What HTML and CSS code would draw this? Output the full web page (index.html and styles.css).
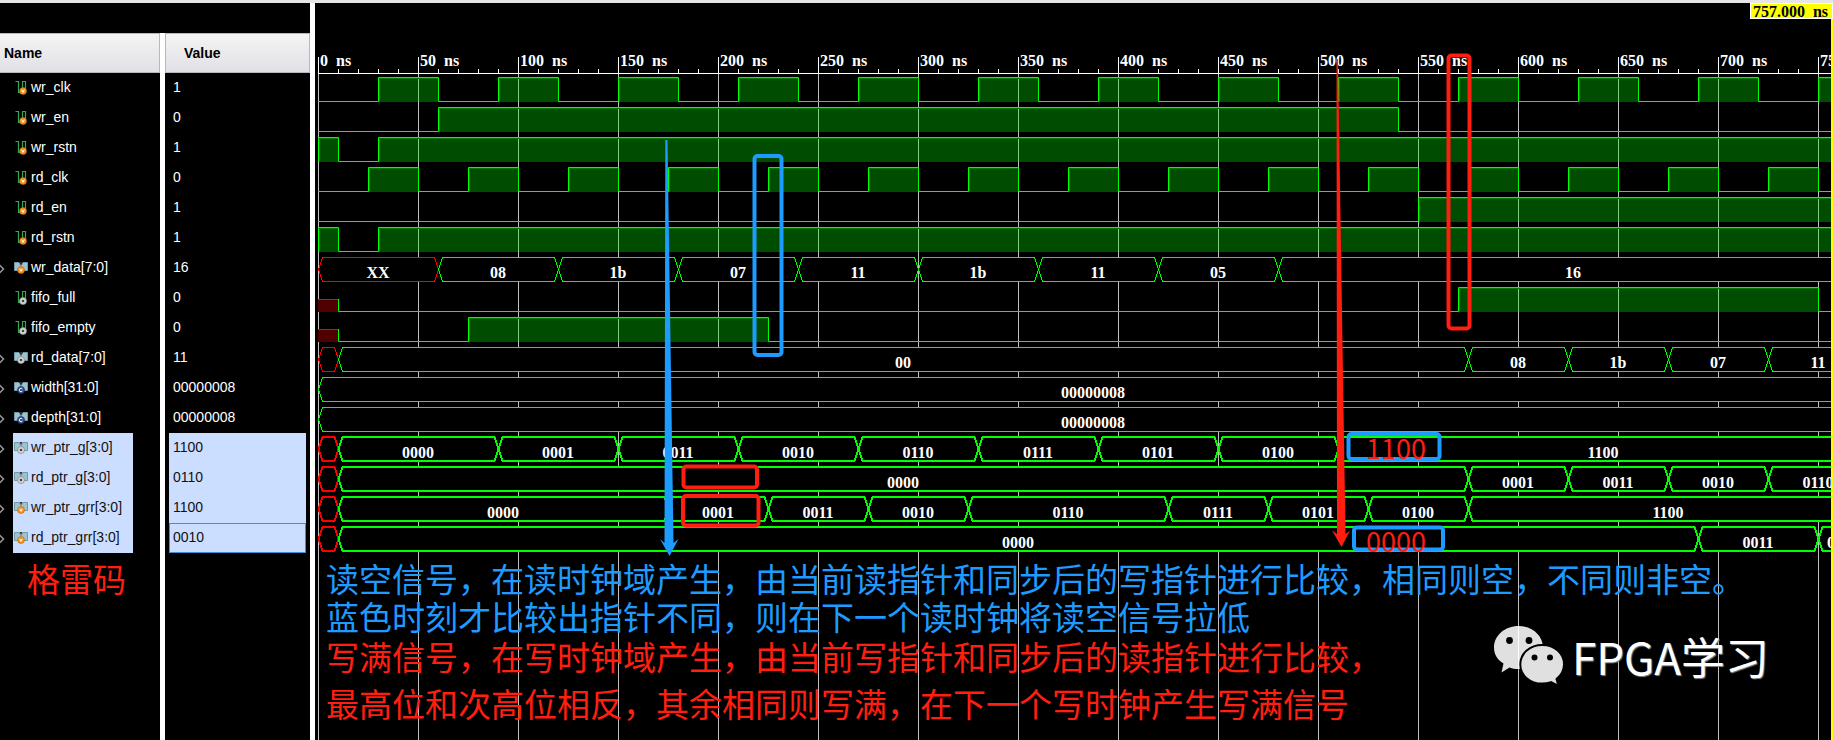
FILE: index.html
```html
<!DOCTYPE html>
<html lang="zh-CN">
<head>
<meta charset="utf-8">
<title>FIFO waveform</title>
<link rel="stylesheet" href="styles.css">
</head>
<body>
<svg class="defs" aria-hidden="true">
  <symbol id="scalar" viewBox="0 0 14 14">
    <path d="M1.500 1.500H4.500V12.500H6M8.500 10V1.500H11.500V10" fill="none" stroke="#35a552" stroke-width="1.200"/>
  </symbol>
  <symbol id="bus" viewBox="0 0 14 14">
    <path d="M.5 2.500H5L7 6L9 2.500H13.500V10.500H.5Z" fill="#9cc3d1" stroke="#7199a8"/>
    <path d="M5.500 2L7 5L8.500 2Z" fill="#333"/>
  </symbol>
  <symbol id="var" viewBox="0 0 8 8">
    <circle cx="4" cy="4" r="3.500" fill="#f7931e" stroke="#b56a1a" stroke-width=".6"/>
    <path d="M2.700 2.700L4 5.300L5.300 2.700" fill="none" stroke="#fff"/>
  </symbol>
  <symbol id="net" viewBox="0 0 8 8">
    <circle cx="4" cy="4" r="3.500" fill="#d8d8d8" stroke="#8a8a8a" stroke-width=".8"/>
    <circle cx="4" cy="4" r="1.300" fill="#444"/>
  </symbol>
  <symbol id="const" viewBox="0 0 8 8">
    <circle cx="4" cy="4" r="3.500" fill="#37508f" stroke="#24376b" stroke-width=".8"/>
    <path d="M5.300 2.900A1.700 1.700 0 1 0 5.300 5.100" fill="none" stroke="#fff"/>
  </symbol>
</svg>
<main class="viewer">
  <section class="signals">
    <table class="signal-table">
      <thead>
        <tr><th class="head-name" scope="col">Name</th><th class="split"></th><th class="head-value" scope="col">Value</th></tr>
      </thead>
      <tbody id="signal-rows"></tbody>
    </table>
    <p class="gray-note">格雷码</p>
  </section>
  <section class="waves">
    <div class="marker-bar"><span class="marker"><span>757.000</span> <span>ns</span></span></div>
    <div class="ruler" id="ruler"></div>
    <div class="plot">
      <div id="wave-rows"></div>
      <div class="notes">
        <p class="note note-blue">读空信号，在读时钟域产生，由当前读指针和同步后的写指针进行比较，相同则空，不同则非空。<br>蓝色时刻才比较出指针不同，则在下一个读时钟将读空信号拉低</p>
        <p class="note note-red">写满信号，在写时钟域产生，由当前写指针和同步后的读指针进行比较，</p>
        <p class="note note-red">最高位和次高位相反，其余相同则写满，在下一个写时钟产生写满信号</p>
      </div>
    </div>
    <div class="cursor"></div>
  </section>
  <svg class="overlay" aria-hidden="true">
    <g class="box-blue">
      <rect x="754.500" y="156" width="27" height="199" rx="3"/>
      <rect x="1348.500" y="434" width="91" height="25" rx="3"/>
      <rect x="1354" y="527.500" width="89" height="22" rx="3"/>
    </g>
    <g class="box-red">
      <rect x="1448.500" y="55.500" width="21" height="273" rx="3"/>
      <rect x="683.500" y="466.500" width="73.500" height="21" rx="3"/>
      <rect x="683" y="496" width="75.500" height="29.500" rx="3"/>
    </g>
    <path class="arrow-blue" d="M665.300 140H667.500L673.500 543L678.500 539L669.500 556L660 539L664.500 543Z"/>
    <path class="arrow-red" d="M1336.500 59H1338L1345.500 534L1350 530.500L1341.500 547L1332 530.500L1337 534Z"/>
    <text class="callout" x="1366" y="459">1100</text>
    <text class="callout" x="1366" y="552">0000</text>
  </svg>
  <div class="watermark">
    <svg class="logo" viewBox="0 0 70 60" aria-hidden="true">
      <path fill="#e0e0e0" d="M24.500 0C38 0 49 9.500 49 21.500S38 43 24.500 43C21 43 18.500 42.500 15.500 41.500L7.500 46.500L9.500 37.500C3.500 34 0 28.500 0 21.500C0 9.500 11 0 24.500 0Z"/>
      <path stroke="#fff" d="M24.500 0V43"/>
      <path fill="#e0e0e0" stroke="#000" stroke-width="2" d="M48.300 19C60.500 19 70 27.500 70 38.300C70 44.500 67 49.500 62.500 53L64.500 60L57 56.200C54 57.200 51.500 57.600 48.300 57.600C36 57.600 26.300 49.500 26.300 38.300C26.300 27.500 36 19 48.300 19Z"/>
      <g fill="#000"><circle cx="15.500" cy="14.500" r="3.400"/><circle cx="35" cy="14.500" r="3.400"/><circle cx="40.500" cy="31.500" r="3"/><circle cx="56" cy="31.500" r="3"/></g>
    </svg>
    <span>FPGA学习</span>
  </div>
</main>
<script src="waves.js"></script>
</body>
</html>
```

FILE: styles.css
```css
* { box-sizing: border-box; }

body {
  margin: 0;
  border-top: 3px solid #e6e6e6;
  background: #000;
  color: #fff;
  font-family: "Liberation Sans", Arial, sans-serif;
  font-size: 14px;
}

p { margin: 0; }

.defs { display: none; }

.viewer {
  position: relative;
  display: flex;
  min-height: calc(100vh - 3px);
  overflow: hidden;
}

/* name / value columns */
.signals {
  flex: none;
  width: 315px;
  padding-top: 30px;
  border-right: 5px solid #fff;
  background: linear-gradient(#fff, #fff) 160px 30px / 5px 100% no-repeat;
}

.signal-table {
  width: 100%;
  table-layout: fixed;
  border-collapse: separate;
  border-spacing: 0;
}

th {
  height: 40px;
  padding: 0 4px;
  border: 1px solid #b8b8bc;
  background: linear-gradient(#f4f4f4, #e0e0e6);
  color: #000;
  text-align: left;
}

th.head-name { width: 160px; border-left: 0; }
th.split { width: 5px; padding: 0; border: 0; background: #fff; }
th.head-value { padding-left: 18px; }

td {
  height: 30px;
  padding: 0;
}

.name { display: flex; height: 30px; }

.expander {
  width: 13px;
  height: 30px;
  padding: 0;
  border: 0;
  background: none;
}

.expander svg { display: block; width: 5px; height: 10px; margin-top: 2px; }

.label {
  display: flex;
  align-items: center;
  gap: 4px;
  width: 120px;
  padding: 0 0 2px 1px;
  font-size: 14px;
}

.icon { flex: none; width: 13px; height: 16px; overflow: visible; }

.value {
  height: 30px;
  margin: 0 4px;
  padding-left: 4px;
  line-height: 29px;
}

.selected .label, .selected .value { background: #ccdeff; color: #111; }
.current .value { border: 1px solid #3d8fd6; padding-left: 3px; line-height: 27px; }

.gray-note {
  padding-left: 27px;
  color: #ff1e0f;
  font: 33px/50px "Noto Sans CJK SC", sans-serif;
}

/* waveform pane */
.waves {
  position: relative;
  display: flex;
  flex-direction: column;
  flex: 1;
  min-width: 0;
  overflow: hidden;
  font: bold 16px/16px "Liberation Serif", serif;
}

.marker-bar {
  display: flex;
  flex: none;
  justify-content: flex-end;
  height: 54px;
}

.marker {
  display: flex;
  gap: 8px;
  height: 16px;
  padding: 0 4px 0 2px;
  border: 1px solid #fff;
  background: #ff0;
  color: #000;
  line-height: 16px;
}

.ruler {
  display: flex;
  flex: none;
  height: 16px;
  margin-left: 3px;
}

.mark {
  display: flex;
  flex: none;
  gap: 8px;
  width: 100px;
  padding-left: 1px;
  border-left: 1px solid #fff;
  background: repeating-linear-gradient(to right, transparent 0 19px, #fff 19px 20px) 0 100% / 98px 4px no-repeat;
  line-height: 8px;
}

.plot {
  flex: 1;
  margin-left: 3px;
  background:
    linear-gradient(#fff, #fff) 0 0 / 100% 1px no-repeat,
    repeating-linear-gradient(to right, #c0c0c0 0 1px, transparent 1px 100px);
}

.wave {
  display: block;
  width: 100%;
  height: 30px;
  overflow: visible;
}

.high { fill: rgb(0 230 0 / 33%); }
.shade { fill: none; stroke: #007c00; }
.trace { fill: none; stroke: #0f0; }
.unknown-fill { fill: #500000; }
.bus { fill: #000; stroke: #0f0; shape-rendering: crispEdges; }
.unknown { stroke: #f00; }
.thick .bus { stroke-width: 2px; }
.bus-text { fill: #fff; text-anchor: middle; }

.notes { padding: 6px 0 0 8px; }
.note { font: 33px/38px "Noto Sans CJK SC", sans-serif; white-space: nowrap; }
.note-blue { color: #1e9bff; }
.note-red { color: #ff1e0f; line-height: 42px; }
.note-red + .note-red { line-height: 52px; }

.cursor {
  position: absolute;
  top: 16px;
  right: 0;
  bottom: 0;
  width: 2px;
  background: #ff0;
}

/* annotations drawn over the traces */
.overlay {
  position: absolute;
  top: -3px;
  left: 0;
  width: 100%;
  height: calc(100% + 3px);
  pointer-events: none;
}

.box-blue, .box-red { fill: none; stroke-width: 4px; }
.box-blue { stroke: #1e9bff; }
.box-red { stroke: #ff1e0f; }
.arrow-blue { fill: #1e9bff; }
.arrow-red { fill: #ff1e0f; }
.callout { fill: #ff1e0f; font: 27px "Noto Sans CJK SC", sans-serif; }

.watermark {
  position: absolute;
  right: 64px;
  bottom: 54px;
  display: flex;
  align-items: center;
  gap: 8px;
  font: 44px/58px "Noto Sans CJK SC", sans-serif;
  text-shadow: 1px 1px 1px #888;
}

.logo { width: 70px; height: 60px; }
```

FILE: waves.js
```js
const PX_PER_NS = 2;
const END = 775;
const VIEW_END = 800;

const pulses = (start, width, period) => {
  const list = [];
  for (let t = start; t < END; t += period) list.push([t, t + width]);
  return list;
};

const signals = [
  { name: "wr_clk", value: "1", kind: "var", high: pulses(30, 30, 60) },
  { name: "wr_en", value: "0", kind: "var", high: [[60, 540]] },
  { name: "wr_rstn", value: "1", kind: "var", high: [[0, 10], [30, VIEW_END]] },
  { name: "rd_clk", value: "0", kind: "var", high: pulses(25, 25, 50) },
  { name: "rd_en", value: "1", kind: "var", high: [[550, VIEW_END]] },
  { name: "rd_rstn", value: "1", kind: "var", high: [[0, 10], [30, VIEW_END]] },
  { name: "wr_data[7:0]", value: "16", kind: "var", bus: [[0, "XX"], [60, "08"], [120, "1b"], [180, "07"], [240, "11"], [300, "1b"], [360, "11"], [420, "05"], [480, "16"]] },
  { name: "fifo_full", value: "0", kind: "net", unknown: 10, high: [[570, 750]] },
  { name: "fifo_empty", value: "0", kind: "net", unknown: 10, high: [[75, 225]] },
  { name: "rd_data[7:0]", value: "11", kind: "net", bus: [[0, ""], [10, "00"], [575, "08"], [625, "1b"], [675, "07"], [725, "11"]] },
  { name: "width[31:0]", value: "00000008", kind: "const", bus: [[0, "00000008"]] },
  { name: "depth[31:0]", value: "00000008", kind: "const", bus: [[0, "00000008"]] },
  { name: "wr_ptr_g[3:0]", value: "1100", kind: "net", selected: true, bus: [[0, ""], [10, "0000"], [90, "0001"], [150, "0011"], [210, "0010"], [270, "0110"], [330, "0111"], [390, "0101"], [450, "0100"], [510, "1100"]] },
  { name: "rd_ptr_g[3:0]", value: "0110", kind: "net", selected: true, bus: [[0, ""], [10, "0000"], [575, "0001"], [625, "0011"], [675, "0010"], [725, "0110"]] },
  { name: "wr_ptr_grr[3:0]", value: "1100", kind: "var", selected: true, bus: [[0, ""], [10, "0000"], [175, "0001"], [225, "0011"], [275, "0010"], [325, "0110"], [425, "0111"], [475, "0101"], [525, "0100"], [575, "1100"]] },
  { name: "rd_ptr_grr[3:0]", value: "0010", kind: "var", selected: true, current: true, bus: [[0, ""], [10, "0000"], [690, "0011"], [750, "0010"]] }
];

const x = t => t * PX_PER_NS + 0.5;

function drawBit(s) {
  let out = "";
  let path = "M0 28.5";
  if (s.unknown) {
    const e = x(s.unknown);
    out += `<path class="unknown-fill" d="M0 16H${e}V29H0Z"/><path class="trace unknown" d="M0 16.5H${e}"/>`;
    path = `M${e} 16V28.5`;
  }
  for (const [a, b] of s.high) {
    out += `<path class="high" d="M${x(a)} 4.500H${x(b)}V29H${x(a)}Z"/><path class="shade" d="M${x(a) + 1} 29V5.500H${x(b)}"/>`;
    path += `H${x(a)}V4.500H${x(b)}V28.500`;
  }
  return `${out}<path class="trace" d="${path}H${x(VIEW_END)}"/>`;
}

function drawBus(s) {
  const top = s.selected ? 4 : 4.5;
  const low = s.selected ? 28 : 28.5;
  const mid = (top + low) / 2;
  return s.bus.map(([t, text], i) => {
    const next = s.bus[i + 1];
    const a = x(t);
    const b = x(next ? next[0] : END);
    const red = text === "" || text === "XX" ? " unknown" : "";
    const shape = next
      ? `M${a} ${mid}L${a + 4} ${top}H${b - 4}L${b} ${mid}L${b - 4} ${low}H${a + 4}Z`
      : `M${x(VIEW_END)} ${top}H${a + 4}L${a} ${mid}L${a + 4} ${low}H${x(VIEW_END)}`;
    const label = text ? `<text class="bus-text" x="${(a + b) / 2 - 0.5}" y="25">${text}</text>` : "";
    return `<path class="bus${red}" d="${shape}"/>${label}`;
  }).join("");
}

document.getElementById("signal-rows").innerHTML = signals.map(s => {
  const state = (s.selected ? "selected" : "") + (s.current ? " current" : "");
  const arrow = s.bus
    ? `<button class="expander" aria-label="Expand ${s.name}"><svg viewBox="0 0 5 10"><path d="M-.500 1L3.500 5L-.500 9" fill="none" stroke="#999" stroke-width="1.500"/></svg></button>`
    : `<span class="expander"></span>`;
  const badge = s.bus ? 'x="3" y="7"' : 'x="5" y="8"';
  return `<tr class="${state}"><td><div class="name">${arrow}<span class="label">
    <svg class="icon" aria-hidden="true"><use href="#${s.bus ? "bus" : "scalar"}" y="1" width="14" height="14"/><use href="#${s.kind}" ${badge} width="8" height="8"/></svg>${s.name}</span></div></td>
    <td></td><td><div class="value">${s.value}</div></td></tr>`;
}).join("");

document.getElementById("wave-rows").innerHTML = signals.map(s =>
  `<svg class="wave${s.selected ? " thick" : ""}" role="img" aria-label="${s.name}">${s.bus ? drawBus(s) : drawBit(s)}</svg>`
).join("");

let marks = "";
for (let t = 0; t <= 750; t += 50) marks += `<div class="mark"><span>${t}</span> <span>ns</span></div>`;
document.getElementById("ruler").innerHTML = marks;
```
